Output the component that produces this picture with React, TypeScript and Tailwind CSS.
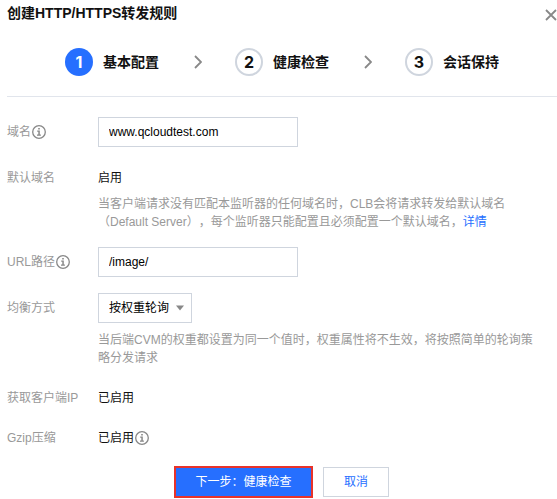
import { useState, type ReactNode } from 'react';
import clsx from 'clsx';

const STEPS = ['基本配置', '健康检查', '会话保持'];

const fieldClass =
  'h-[30px] border border-[#cfd5de] bg-white px-2.5 text-xs text-black outline-none focus:border-[#266fff]';

function InfoIcon() {
  return (
    <svg className="ml-px h-3.5 w-3.5 shrink-0 text-[#888]" viewBox="0 0 14 14" fill="none" aria-hidden="true">
      <circle cx="7" cy="7" r="6.3" stroke="currentColor" strokeWidth="1.3" />
      <path d="M6.2 3h1.6v1.5H6.2zM5.2 5.6h2.6v4h1.1v1.2H5V9.6h1.3V6.8H5.2z" fill="currentColor" />
    </svg>
  );
}

interface FormRowProps {
  label: string;
  htmlFor?: string;
  info?: boolean;
  children: ReactNode;
}

function FormRow({ label, htmlFor, info, children }: FormRowProps) {
  return (
    <div className="flex items-start">
      <div className="flex h-[30px] w-[91px] shrink-0 items-center text-[#999]">
        {htmlFor ? <label htmlFor={htmlFor}>{label}</label> : <span>{label}</span>}
        {info && <InfoIcon />}
      </div>
      <div className="min-w-0 flex-1">{children}</div>
    </div>
  );
}

function StepBar({ current }: { current: number }) {
  return (
    <ol className="ml-[58px] flex items-center">
      {STEPS.map((step, i) => (
        <li key={step} className={clsx('flex shrink-0 items-center', i < STEPS.length - 1 && 'w-[170px]')}>
          <span
            className={clsx(
              'flex h-7 w-7 items-center justify-center rounded-full font-["Inter","Liberation_Sans",sans-serif] text-base font-bold',
              i === current ? 'bg-[#266fff] text-white' : 'border-2 border-[#cfd5de] text-[#111]',
            )}
          >
            {i + 1}
          </span>
          <span className="ml-2.5 text-sm font-bold text-[#111]">{step}</span>
          {i < STEPS.length - 1 && (
            <svg className="ml-[35px] h-3.5 w-2 text-[#888]" viewBox="0 0 8 14" fill="none" aria-hidden="true">
              <path d="M1 1l6 6-6 6" stroke="currentColor" strokeWidth="1.8" />
            </svg>
          )}
        </li>
      ))}
    </ol>
  );
}

export default function App() {
  const [domain, setDomain] = useState('www.qcloudtest.com');
  const [path, setPath] = useState('/image/');

  return (
    <div className='bg-white pl-[7px] font-["Liberation_Sans","Noto_Sans_CJK_SC",sans-serif] text-xs leading-[18px] text-[#111] [text-spacing-trim:space-all]'>
      <header className="flex items-start justify-between pt-[3px]">
        <h1 className="text-sm font-bold">创建HTTP/HTTPS转发规则</h1>
        <button type="button" aria-label="关闭" className="mt-1.5 text-[#888]">
          <svg className="h-3 w-3" viewBox="0 0 12 12" fill="none">
            <path d="M1 1l10 10M11 1L1 11" stroke="currentColor" strokeWidth="1.8" />
          </svg>
        </button>
      </header>

      <div className="mt-[25px] border-b border-[#e1e5ec] pb-5">
        <StepBar current={0} />
      </div>

      <form className="mt-5" onSubmit={(e) => e.preventDefault()}>
        <div className="flex flex-col gap-4 pr-4">
          <FormRow label="域名" htmlFor="domain" info>
            <input
              id="domain"
              className={clsx(fieldClass, 'block w-[200px]')}
              value={domain}
              onChange={(e) => setDomain(e.target.value)}
            />
          </FormRow>

          <FormRow label="默认域名">
            <p className="leading-[30px]">启用</p>
            <p className="mt-0.5 text-[#999]">
              当客户端请求没有匹配本监听器的任何域名时，CLB会将请求转发给默认域名（Default
              Server），每个监听器只能配置且必须配置一个默认域名，
              <a href="#detail" className="text-[#266fff]">
                详情
              </a>
            </p>
          </FormRow>

          <FormRow label="URL路径" htmlFor="path" info>
            <input
              id="path"
              className={clsx(fieldClass, 'block w-[200px]')}
              value={path}
              onChange={(e) => setPath(e.target.value)}
            />
          </FormRow>

          <FormRow label="均衡方式" htmlFor="balance">
            <div className="relative w-[94px]">
              <select id="balance" className={clsx(fieldClass, 'block w-full appearance-none')} defaultValue="wrr">
                <option value="wrr">按权重轮询</option>
                <option value="least">最小连接数</option>
                <option value="hash">IP Hash</option>
              </select>
              <svg
                className="pointer-events-none absolute top-3 right-2 h-[6px] w-2 text-[#888]"
                viewBox="0 0 8 6"
                aria-hidden="true"
              >
                <path d="M0 .5h8L4 5.5z" fill="currentColor" />
              </svg>
            </div>
            <p className="mt-2 text-[#999]">
              当后端CVM的权重都设置为同一个值时，权重属性将不生效，将按照简单的轮询策略分发请求
            </p>
          </FormRow>

          <div className="flex flex-col gap-2.5">
            <FormRow label="获取客户端IP">
              <p className="leading-[30px]">已启用</p>
            </FormRow>
            <FormRow label="Gzip压缩">
              <p className="flex items-center leading-[30px]">
                已启用
                <InfoIcon />
              </p>
            </FormRow>
          </div>
        </div>

        <div className="mt-[13px] flex items-center justify-center gap-2.5 pr-px">
          <button type="submit" className="h-8 w-[139px] border-2 border-[#e8332a] bg-[#266fff] text-white">
            下一步：健康检查
          </button>
          <button type="button" className="h-[30px] border border-[#cfd5de] px-5 text-[#266fff]">
            取消
          </button>
        </div>
      </form>
    </div>
  );
}
